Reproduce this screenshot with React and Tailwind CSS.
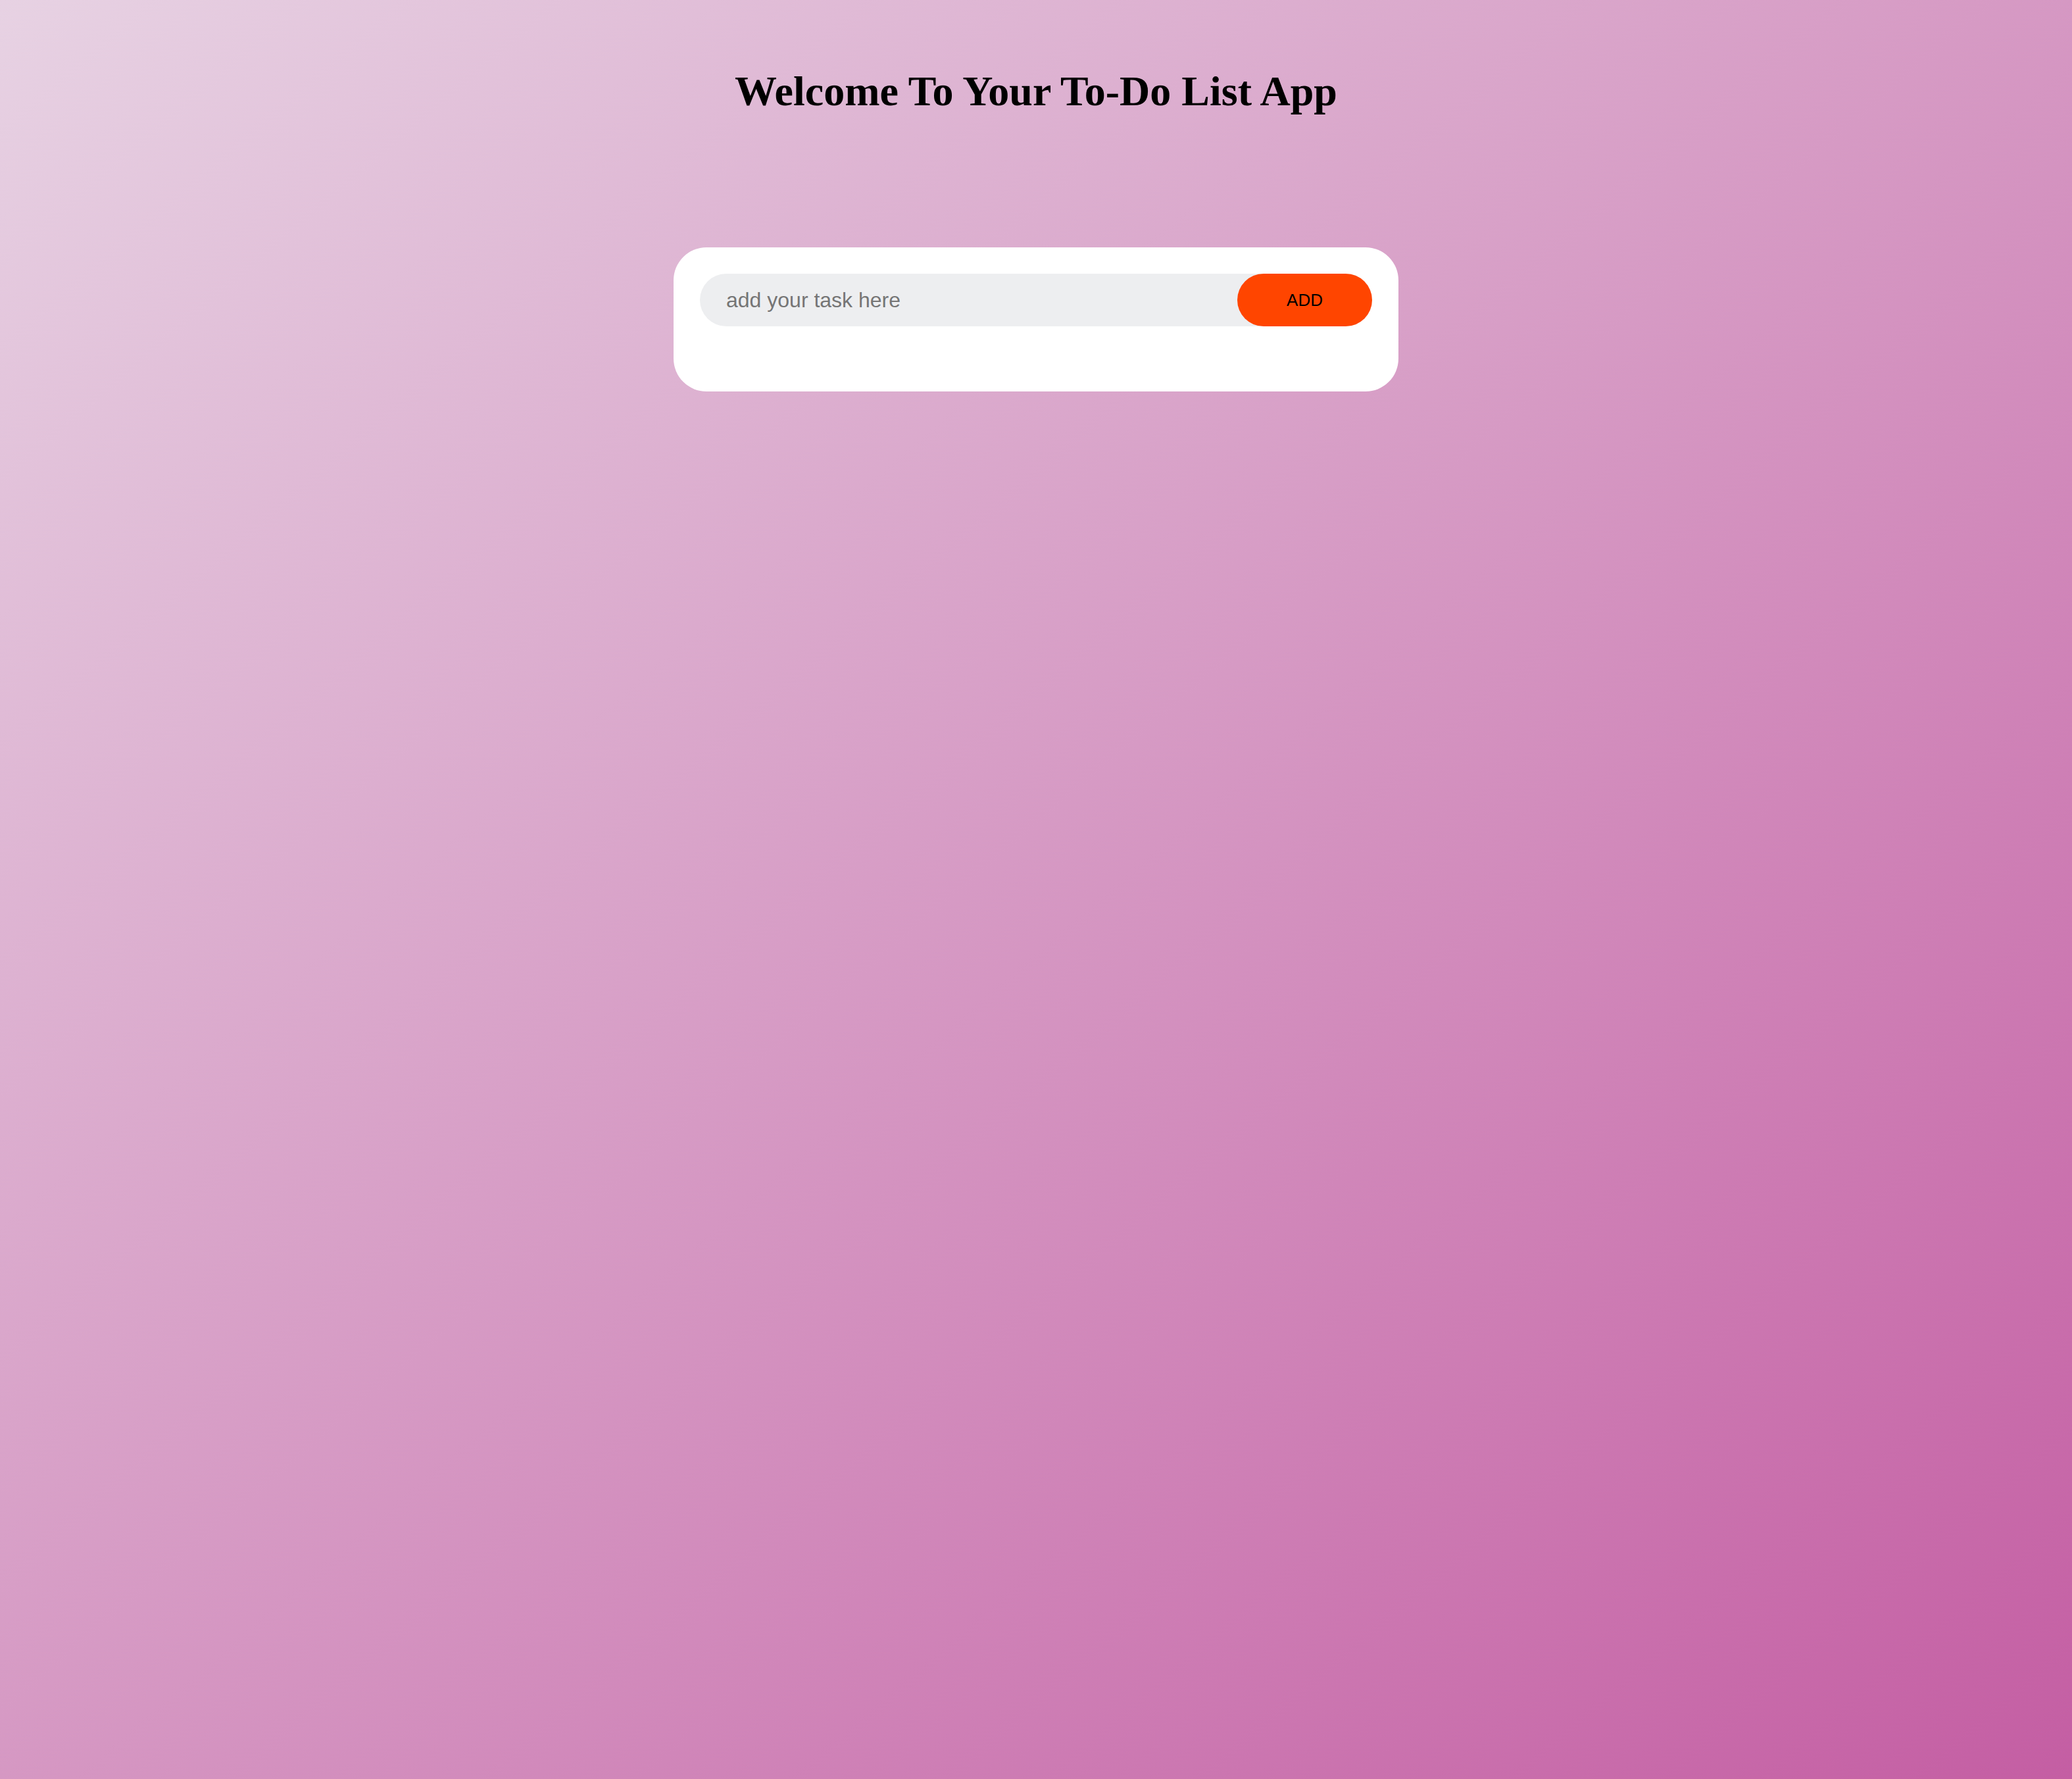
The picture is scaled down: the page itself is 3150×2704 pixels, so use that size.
import React, { useState } from 'react';

export default function App() {
  const [task, setTask] = useState('');
  const [tasks, setTasks] = useState([]);

  const handleAdd = () => {
    if (!task.trim()) return;
    setTasks([...tasks, task.trim()]);
    setTask('');
  };

  return (
    <div className="min-h-screen w-full bg-[linear-gradient(to_bottom_right,#e7d2e3,#c45ea3)] pt-[102px]">
      <h1 className="text-center text-[64px] leading-[74px] font-bold text-black font-['Liberation_Serif',serif]">
        Welcome To Your To-Do List App
      </h1>

      {/* Task card */}
      <div className="mx-auto mt-[200px] w-[1102px] rounded-[50px] bg-white px-10 pt-10 pb-[99px] font-['Liberation_Sans',Arial,sans-serif]">
        <div className="flex h-20 items-center rounded-full bg-[#edeef0] pl-10">
          <input
            type="text"
            value={task}
            onChange={(e) => setTask(e.target.value)}
            placeholder="add your task here"
            className="flex-1 bg-transparent text-[32px] text-black outline-none placeholder:text-[#757575]"
          />
          <button
            onClick={handleAdd}
            className="h-20 w-[205px] rounded-full bg-[#ff4500] text-[26px] text-black"
          >
            ADD
          </button>
        </div>
        {tasks.length > 0 && (
          <ul className="mt-6 text-[30px]">
            {tasks.map((t, i) => (
              <li key={i} className="py-3">{t}</li>
            ))}
          </ul>
        )}
      </div>
    </div>
  );
}
